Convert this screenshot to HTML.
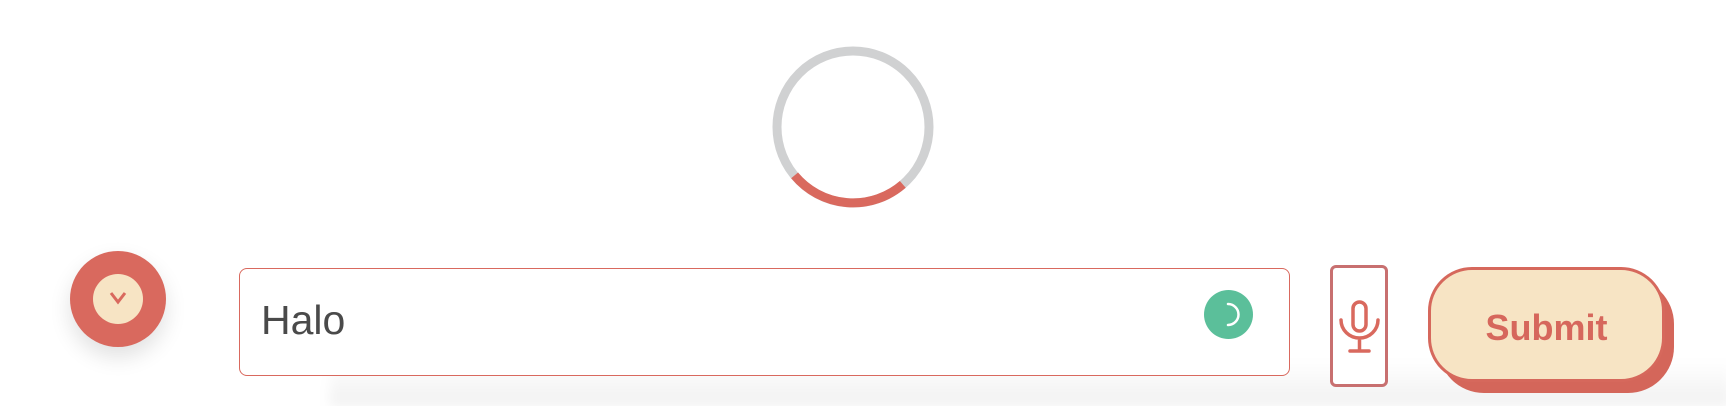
<!DOCTYPE html>
<html><head><meta charset="utf-8"><style>
html,body{margin:0;padding:0}
body{width:1726px;height:406px;position:relative;overflow:hidden;background:#fff;font-family:"Liberation Sans",sans-serif}
.abs{position:absolute}
</style></head><body>
<div class="abs" style="left:330px;top:360px;width:1400px;height:46px;background:linear-gradient(to bottom,rgba(0,0,0,0),rgba(0,0,0,0.06));filter:blur(6px)"></div>
<svg class="abs" style="left:0;top:0" width="1726" height="406">
<circle cx="853" cy="127" r="76" fill="none" stroke="#d0d1d2" stroke-width="9"/>
<path d="M794.6 175.4 A76 76 0 0 0 902.8 184.4" fill="none" stroke="#d9695e" stroke-width="9"/>
</svg>
<div class="abs" style="left:70px;top:251px;width:96px;height:96px;border-radius:50%;background:#d9695e;box-shadow:0 10px 22px rgba(0,0,0,0.12)"></div>
<div class="abs" style="left:93px;top:274px;width:50px;height:50px;border-radius:50%;background:#f7e4c4"></div>
<svg class="abs" style="left:106px;top:288px" width="24" height="20"><path d="M5 5 L12 14 L19 5" fill="none" stroke="#d9695e" stroke-width="3"/></svg>
<div class="abs" style="left:239px;top:268px;width:1049px;height:106px;border:1.5px solid #d9695e;border-radius:8px;background:#fff"></div>
<div class="abs" style="left:261px;top:296px;font-size:41px;color:#4a4a4a;line-height:48px">Halo</div>
<div class="abs" style="left:1204px;top:290px;width:49px;height:49px;border-radius:50%;background:#5bbf9a"></div>
<svg class="abs" style="left:1204px;top:290px" width="49" height="49"><path d="M24 14 A10 10 0 0 1 24 35" fill="none" stroke="#fff" stroke-width="2.5" stroke-linecap="round"/></svg>
<div class="abs" style="left:1330px;top:265px;width:52px;height:116px;border:3px solid #c87070;border-radius:6px;background:#fff"></div>
<svg class="abs" style="left:1335px;top:296px" width="50" height="64"><rect x="18" y="6" width="13" height="29" rx="6.5" fill="none" stroke="#d9695e" stroke-width="3.5"/><path d="M6 24 A18.5 18 0 0 0 43 24 M24.5 42 V54 M15 55 H34" fill="none" stroke="#d9695e" stroke-width="3.5" stroke-linecap="round"/></svg>
<div class="abs" style="left:1438px;top:278px;width:236px;height:115px;border-radius:46px;background:#d4665a"></div>
<div class="abs" style="left:1428px;top:267px;width:231px;height:109px;border:3px solid #d6685c;border-radius:44px;background:#f7e4c4"></div>
<div class="abs" style="left:1428px;top:272px;width:237px;height:112px;text-align:center;line-height:112px;font-size:36px;font-weight:bold;color:#d6675c">Submit</div>
</body></html>
